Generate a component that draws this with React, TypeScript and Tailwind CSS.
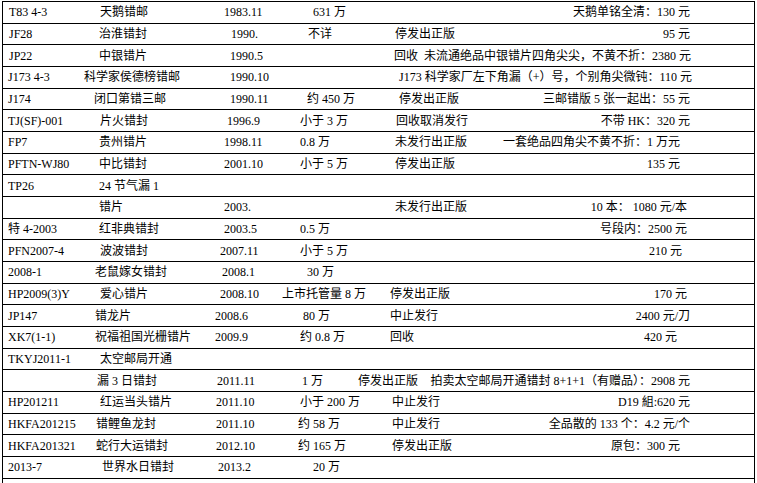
import React from "react";

type Cell = [string, string];

interface Row {
  a?: Cell;
  b?: Cell;
  c?: Cell;
  d?: Cell;
  s?: Cell;
  p?: Cell;
}

// column starts: 8 / 94 / 214 / 297 / 389, last column ends at x=690
const rows: Row[] = [
  { a: ["T83 4-3", "ml-[1px]"], b: ["天鹅错邮", "ml-[6px]"], c: ["1983.11", "ml-[10px]"], d: ["631 万", "ml-[16px]"], p: ["天鹅单铭全清：130 元", "mr-0"] },
  { a: ["JF28", "ml-[1px]"], b: ["治淮错封", "ml-[5px]"], c: ["1990.", "ml-[17px]"], d: ["不详", "ml-[11px]"], s: ["停发出正版", "ml-[6px]"], p: ["95 元", "mr-0"] },
  { a: ["JP22", "ml-[1px]"], b: ["中银错片", "ml-[5px]"], c: ["1990.5", "ml-[16px]"], s: ["回收  未流通绝品中银错片四角尖尖，不黄不折：2380 元", "ml-[5px]"] },
  { a: ["J173 4-3", "ml-0"], b: ["科学家侯德榜错邮", "-ml-[10px]"], c: ["1990.10", "ml-[16px]"], s: ["J173 科学家厂左下角漏（+）号，个别角尖微钝：110 元", "ml-[10px]"] },
  { a: ["J174", "ml-0"], b: ["闭口第错三邮", "ml-0"], c: ["1990.11", "ml-[16px]"], d: ["约 450 万", "ml-[10px]"], s: ["停发出正版", "ml-[10px]"], p: ["三邮错版 5 张一起出：55 元", "mr-0"] },
  { a: ["TJ(SF)-001", "ml-0"], b: ["片火错封", "ml-[6px]"], c: ["1996.9", "ml-[13px]"], d: ["小于 3 万", "ml-[3px]"], s: ["回收取消发行", "ml-[7px]"], p: ["不带 HK：320 元", "mr-0"] },
  { a: ["FP7", "ml-0"], b: ["贵州错片", "ml-[5px]"], c: ["1998.11", "ml-[10px]"], d: ["0.8 万", "ml-[3px]"], s: ["未发行出正版", "ml-[6px]"], p: ["一套绝品四角尖不黄不折：1 万元", "mr-[10px]"] },
  { a: ["PFTN-WJ80", "ml-0"], b: ["中比错封", "ml-[5px]"], c: ["2001.10", "ml-[10px]"], d: ["小于 5 万", "ml-[3px]"], s: ["停发出正版", "ml-[6px]"], p: ["135 元", "mr-[10px]"] },
  { a: ["TP26", "ml-0"], b: ["24 节气漏 1", "ml-[5px]"] },
  { b: ["错片", "ml-[5px]"], c: ["2003.", "ml-[10px]"], s: ["未发行出正版", "ml-[6px]"], p: ["10 本： 1080 元/本", "mr-[3px]"] },
  { a: ["特 4-2003", "ml-0"], b: ["红非典错封", "ml-[5px]"], c: ["2003.5", "ml-[10px]"], d: ["0.5 万", "ml-[3px]"], p: ["号段内：2500 元", "mr-[3px]"] },
  { a: ["PFN2007-4", "ml-0"], b: ["波波错封", "ml-[6px]"], c: ["2007.11", "ml-[6px]"], d: ["小于 5 万", "ml-[3px]"], p: ["210 元", "mr-[8px]"] },
  { a: ["2008-1", "ml-0"], b: ["老鼠嫁女错封", "ml-[1px]"], c: ["2008.1", "ml-[8px]"], d: ["30 万", "ml-[10px]"] },
  { a: ["HP2009(3)Y", "ml-0"], b: ["爱心错片", "ml-[6px]"], c: ["2008.10", "ml-[6px]"], d: ["上市托管量 8 万", "-ml-[15px]"], s: ["停发出正版", "ml-[1px]"], p: ["170 元", "mr-[3px]"] },
  { a: ["JP147", "ml-0"], b: ["错龙片", "ml-[1px]"], c: ["2008.6", "ml-[1px]"], d: ["80 万", "ml-[6px]"], s: ["中止发行", "ml-[1px]"], p: ["2400 元/刀", "mr-0"] },
  { a: ["XK7(1-1)", "ml-0"], b: ["祝福祖国光栅错片", "ml-[1px]"], c: ["2009.9", "ml-[1px]"], d: ["约 0.8 万", "ml-[3px]"], s: ["回收", "ml-[1px]"], p: ["420 元", "mr-[13px]"] },
  { a: ["TKYJ2011-1", "ml-0"], b: ["太空邮局开通", "ml-[6px]"] },
  { b: ["漏 3 日错封", "ml-[3px]"], c: ["2011.11", "ml-[3px]"], d: ["1 万", "ml-[5px]"], s: ["停发出正版", "-ml-[31px]"], p: ["拍卖太空邮局开通错封 8+1+1（有赠品）：2908 元", "mr-0"] },
  { a: ["HP201211", "ml-0"], b: ["红运当头错片", "ml-[6px]"], c: ["2011.10", "ml-[2px]"], d: ["小于 200 万", "ml-[3px]"], s: ["中止发行", "ml-[3px]"], p: ["D19 組:620 元", "mr-0"] },
  { a: ["HKFA201215", "ml-0"], b: ["错鲤鱼龙封", "ml-[2px]"], c: ["2011.10", "ml-[2px]"], d: ["约 58 万", "ml-[1px]"], s: ["中止发行", "ml-[3px]"], p: ["全品散的 133 个：4.2 元/个", "mr-0"] },
  { a: ["HKFA201321", "ml-0"], b: ["蛇行大运错封", "ml-[2px]"], c: ["2012.10", "ml-[2px]"], d: ["约 165 万", "ml-[1px]"], s: ["停发出正版", "ml-[3px]"], p: ["原包：300 元", "mr-[10px]"] },
  { a: ["2013-7", "ml-0"], b: ["世界水日错封", "ml-[8px]"], c: ["2013.2", "ml-[4px]"], d: ["20 万", "ml-[16px]"] },
  {},
];

function Txt({ cell }: { cell?: Cell }) {
  if (!cell) return <span />;
  return <span className={"inline-block whitespace-pre " + cell[1]}>{cell[0]}</span>;
}

export default function App() {
  return (
    <div className="w-[757px] h-[483px] overflow-hidden bg-white pl-[2px] pt-[1px] text-black font-['Liberation_Serif','Noto_Sans_CJK_SC',serif] text-[12px] leading-none">
      <div className="w-[753px] border-l border-r border-t border-black">
        {rows.map((r, i) => (
          <div
            key={i}
            className="h-[21.68px] border-b border-black pl-[5px] pr-[64px] grid grid-cols-[86px_120px_83px_92px_1fr] items-center whitespace-nowrap"
          >
            <div><Txt cell={r.a} /></div>
            <div><Txt cell={r.b} /></div>
            <div><Txt cell={r.c} /></div>
            <div><Txt cell={r.d} /></div>
            <div className="flex justify-between">
              <Txt cell={r.s} />
              <Txt cell={r.p} />
            </div>
          </div>
        ))}
      </div>
    </div>
  );
}
